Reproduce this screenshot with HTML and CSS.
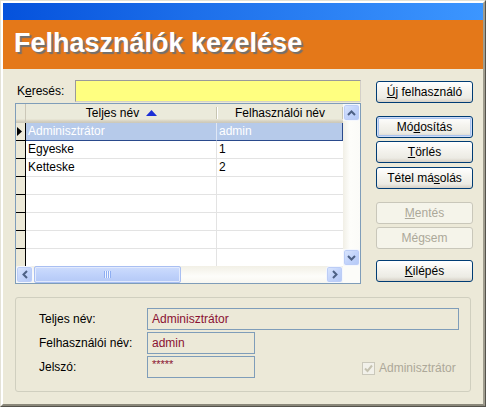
FILE: index.html
```html
<!DOCTYPE html>
<html lang="hu">
<head>
<meta charset="utf-8">
<title>Felhasználók kezelése</title>
<link rel="stylesheet" href="styles.css">
</head>
<body>
<div class="window">
  <div class="frame">
    <div class="titlebar"></div>
    <div class="banner"><h1>Felhasználók kezelése</h1></div>
    <div class="main">
      <div class="top">
        <div class="leftcol">
          <div class="search">
            <label class="search-label">K<u>e</u>resés:</label>
            <div class="searchbox"></div>
          </div>
          <div class="grid">
            <div class="data">
              <div class="hdr">
                <div class="hsel"></div>
                <div class="hc c1">Teljes név <svg class="sort" width="11" height="6" viewBox="0 0 11 6"><path d="M0 6 5.5 0 11 6Z" fill="#1c2fd6"/></svg></div>
                <div class="hc c2">Felhasználói név</div>
              </div>
              <div class="row selected">
                <div class="sel"><svg width="5" height="9" viewBox="0 0 5 9"><path d="M0 0 5 4.5 0 9Z" fill="#000"/></svg></div>
                <div class="cell c1">Adminisztrátor</div>
                <div class="cell c2">admin</div>
              </div>
              <div class="row">
                <div class="sel"></div>
                <div class="cell c1">Egyeske</div>
                <div class="cell c2">1</div>
              </div>
              <div class="row">
                <div class="sel"></div>
                <div class="cell c1">Ketteske</div>
                <div class="cell c2">2</div>
              </div>
              <div class="row"><div class="sel"></div><div class="cell c1"></div><div class="cell c2"></div></div>
              <div class="row"><div class="sel"></div><div class="cell c1"></div><div class="cell c2"></div></div>
              <div class="row"><div class="sel"></div><div class="cell c1"></div><div class="cell c2"></div></div>
              <div class="row"><div class="sel"></div><div class="cell c1"></div><div class="cell c2"></div></div>
              <div class="row"><div class="sel"></div><div class="cell c1"></div><div class="cell c2"></div></div>
            </div>
            <div class="vscroll">
              <div class="sbtn"><svg width="9" height="6" viewBox="0 0 9 6"><path d="M1 5 4.5 1.5 8 5" stroke="#4d6185" stroke-width="2" fill="none"/></svg></div>
              <div class="vtrack"></div>
              <div class="sbtn"><svg width="9" height="6" viewBox="0 0 9 6"><path d="M1 1 4.5 4.5 8 1" stroke="#4d6185" stroke-width="2" fill="none"/></svg></div>
            </div>
            <div class="hscroll">
              <div class="sbtn"><svg width="6" height="9" viewBox="0 0 6 9"><path d="M5 1 1.5 4.5 5 8" stroke="#4d6185" stroke-width="2" fill="none"/></svg></div>
              <div class="thumb"><span class="grip"></span></div>
              <div class="htrack"></div>
              <div class="sbtn"><svg width="6" height="9" viewBox="0 0 6 9"><path d="M1 1 4.5 4.5 1 8" stroke="#4d6185" stroke-width="2" fill="none"/></svg></div>
            </div>
            <div class="corner"></div>
          </div>
        </div>
        <div class="buttons">
          <button class="btn b-new"><u>Ú</u>j felhasználó</button>
          <button class="btn b-mod default">Mó<u>d</u>osítás</button>
          <button class="btn b-del"><u>T</u>örlés</button>
          <button class="btn b-copy">Tétel má<u>s</u>olás</button>
          <button class="btn b-save" disabled><u>M</u>entés</button>
          <button class="btn b-cancel" disabled>Mé<u>g</u>sem</button>
          <button class="btn b-exit"><u>K</u>ilépés</button>
        </div>
      </div>
      <div class="group">
        <div class="frow">
          <span class="flabel">Teljes név:</span>
          <div class="field f-wide">Adminisztrátor</div>
        </div>
        <div class="frow">
          <span class="flabel">Felhasználói név:</span>
          <div class="field f-short">admin</div>
        </div>
        <div class="frow">
          <span class="flabel">Jelszó:</span>
          <div class="field f-short pw">*****</div>
          <div class="check">
            <span class="box"><svg width="9" height="9" viewBox="0 0 9 9"><path d="M1 4.5 3.5 7 8 1.5" stroke="#c5c2b0" stroke-width="2" fill="none"/></svg></span>
            <span class="check-label">Adminisztrátor</span>
          </div>
        </div>
      </div>
    </div>
  </div>
</div>
</body>
</html>
```

FILE: styles.css
```css
body {
  margin: 0;
  font-family: "Liberation Sans", Arial, sans-serif;
  font-size: 12px;
  color: #000;
}

.window {
  width: 486px;
  height: 407px;
  box-sizing: border-box;
  border: 1px solid;
  border-color: #e4e2d6 #55534b #55534b #e4e2d6;
}

.frame {
  height: 100%;
  box-sizing: border-box;
  border: 2px solid;
  border-color: #ffffff #a09d8f #8a877a #ffffff;
  background: #ece9d8;
  display: flex;
  flex-direction: column;
}

.titlebar {
  height: 17px;
  background: linear-gradient(90deg, #0552dc 0%, #1d6fea 40%, #3c96ff 100%);
}

.banner {
  height: 49px;
  box-sizing: border-box;
  background: #e47819;
  padding: 10px 0 0 11px;
}

.banner h1 {
  margin: 0;
  font-size: 27px;
  line-height: 27px;
  font-weight: bold;
  color: #fff;
  text-shadow: 2px 2px 1px #707070;
}

.main {
  flex: 1;
  padding: 11px 0 0 12px;
}

.top {
  display: flex;
}

.leftcol {
  width: 346px;
}

.search {
  display: flex;
  align-items: center;
  height: 22px;
  margin-bottom: 1px;
}

.search-label {
  width: 58px;
  padding-left: 2px;
}

.searchbox {
  width: 286px;
  height: 22px;
  box-sizing: border-box;
  background: #ffff80;
  border: 1px solid;
  border-color: #9a9a9a #d4d0c8 #d4d0c8 #9a9a9a;
}

/* grid */
.grid {
  width: 346px;
  height: 181px;
  box-sizing: border-box;
  border: 1px solid #7f9db9;
  display: grid;
  grid-template-columns: 327px 17px;
  grid-template-rows: 162px 17px;
  background: #fff;
}

.data {
  overflow: hidden;
}

.hdr {
  display: flex;
  height: 19px;
  background: linear-gradient(#ebeadb 0%, #ebeadb 78%, #e2decd 84%, #d6d2c2 90%, #cbc7b8 100%);
}

.hsel {
  width: 10px;
  box-sizing: border-box;
  border-right: 1px solid #cbc7b8;
}

.hc {
  box-sizing: border-box;
  display: flex;
  align-items: center;
  justify-content: center;
  position: relative;
  padding-bottom: 2px;
}

.hc.c1::after,
.hc.c2::after {
  content: "";
  position: absolute;
  right: 0;
  top: 3px;
  bottom: 4px;
  width: 1px;
  background: #c7c5b2;
  box-shadow: 1px 0 0 #fff;
}

.sort {
  margin-left: 7px;
  margin-top: 1px;
}

.c1 {
  width: 191px;
}

.c2 {
  width: 126px;
}

.row {
  display: flex;
  height: 18px;
}

.sel {
  width: 10px;
  box-sizing: border-box;
  background: #ece9d8;
  border-right: 1px solid #000;
  border-bottom: 1px solid #000;
  display: flex;
  align-items: center;
  padding-left: 1px;
}

.cell {
  box-sizing: border-box;
  border-bottom: 1px solid #e3e3e3;
  padding-left: 2px;
  line-height: 17px;
  white-space: nowrap;
}

.cell.c1 {
  border-right: 1px solid #e3e3e3;
}

.selected .cell {
  background: #b6caea;
  color: #fff;
  border-bottom-color: #2a4a8c;
}

.selected .cell.c1 {
  border-right-color: #dfe7f5;
}

.selected .cell.c2 {
  border-right: 1px solid #2a4a8c;
}

/* scrollbars */
.sbtn {
  width: 17px;
  height: 17px;
  box-sizing: border-box;
  border: 1px solid #f4f7fe;
  border-radius: 3px;
  background: linear-gradient(135deg, #dce7fd 0%, #c3d4fb 50%, #b4c8f6 100%);
  box-shadow: inset 0 0 0 1px #bccdf6;
  display: flex;
  align-items: center;
  justify-content: center;
  flex: none;
}

.vscroll {
  display: flex;
  flex-direction: column;
  background: #fbfbf8;
}

.vtrack {
  flex: 1;
  background: linear-gradient(90deg, #f1efe6, #fdfdfa 40%, #fbfbf8);
}

.hscroll {
  display: flex;
  background: linear-gradient(#f2f0e6, #fdfdfa 60%, #f8f7f1);
}

.thumb {
  width: 147px;
  margin-left: 1px;
  box-sizing: border-box;
  border: 1px solid #a9bff2;
  border-radius: 2px;
  background: linear-gradient(#cddcfd, #bdd0fa 60%, #b5c9f7);
  box-shadow: inset 0 0 0 1px #e2eafd;
  display: flex;
  align-items: center;
  justify-content: center;
}

.grip {
  width: 7px;
  height: 7px;
  background: repeating-linear-gradient(90deg, #8eaef2 0, #8eaef2 1px, #eef3fe 1px, #eef3fe 2px);
}

.htrack {
  flex: 1;
}

.corner {
  background: #fcfcf9;
}

/* buttons */
.buttons {
  margin-left: 15px;
  width: 97px;
  padding-top: 1px;
  display: flex;
  flex-direction: column;
}

.btn {
  height: 22px;
  width: 97px;
  box-sizing: border-box;
  font-family: "Liberation Sans", Arial, sans-serif;
  font-size: 12px;
  color: #000;
  border: 1px solid #003c74;
  border-radius: 3px;
  background: linear-gradient(#ffffff 0%, #f5f4ef 40%, #ecebe4 80%, #d6d0c5 100%);
  padding: 0;
  flex: none;
}

.btn.default {
  box-shadow: inset 0 0 0 1px #cfdcf6, inset 0 0 0 2px #a9c3ef;
}

.btn:disabled {
  border-color: #c9c7ba;
  background: #f5f4ea;
  color: #aca899;
}

.b-mod { margin-top: 13px; }
.b-del { margin-top: 3px; }
.b-copy { margin-top: 4px; }
.b-save { margin-top: 13px; }
.b-cancel { margin-top: 3px; }
.b-exit { margin-top: 11px; }

/* group box */
.group {
  width: 456px;
  height: 95px;
  margin-top: 13px;
  box-sizing: border-box;
  border: 1px solid #d0cfbf;
  border-radius: 3px;
  padding: 10px 0 0 23px;
}

.frow {
  display: flex;
  align-items: center;
  height: 22px;
  margin-bottom: 2px;
}

.flabel {
  width: 108px;
}

.field {
  height: 22px;
  box-sizing: border-box;
  border: 1px solid #7f9db9;
  padding-left: 4px;
  line-height: 20px;
  color: #8a1232;
}

.f-wide {
  width: 312px;
}

.f-short {
  width: 108px;
}

.pw {
  line-height: 15px;
  font-size: 11px;
}

.check {
  display: flex;
  align-items: center;
  margin-left: 107px;
  margin-top: 2px;
}

.box {
  width: 13px;
  height: 13px;
  box-sizing: border-box;
  border: 1px solid #cac8bb;
  background: #f2f1ea;
  display: flex;
  align-items: center;
  justify-content: center;
}

.check-label {
  margin-left: 4px;
  color: #aca899;
}
```
